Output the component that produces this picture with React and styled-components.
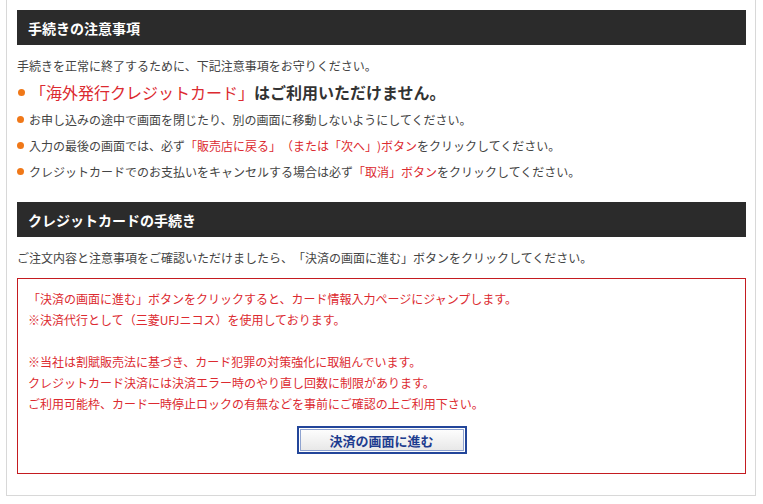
import styled, { createGlobalStyle } from "styled-components";

const GlobalStyle = createGlobalStyle`
  html, body {
    margin: 0;
    padding: 0;
    background: #fff;
  }
  body {
    font-family: "Noto Sans CJK JP", "Noto Sans", sans-serif;
    color: #444;
    text-spacing-trim: space-all;
  }
`;

const Page = styled.div`
  padding: 0 7px 0 6px;
`;

const Panel = styled.div`
  border: 1px solid #d8d8d8;
  border-top: none;
  padding: 10px 9px 21px 10px;
`;

const Heading = styled.h2`
  margin: ${(props) => props.$top || 0}px 0 0;
  height: 35px;
  padding: 0 11px;
  display: flex;
  align-items: center;
  background: #2b2b2b;
  color: #fff;
  font-size: 14px;
  font-weight: 700;
`;

const Lead = styled.p`
  margin: ${(props) => props.$mt || 10}px 0 0;
  font-size: 12px;
  line-height: ${(props) => props.$lh || 22}px;
`;

const NoticeList = styled.ul`
  margin: 1px 0 0;
  padding: 0;
  list-style: none;
`;

const Item = styled.li`
  display: flex;
  align-items: center;
  height: ${(props) => (props.$big ? 28 : 26)}px;
  font-size: ${(props) => (props.$big ? 16 : 12)}px;
  &::before {
    content: "";
    flex: none;
    width: 7px;
    height: 7px;
    border-radius: 50%;
    background: #f07818;
    margin: 0 5px 0 ${(props) => (props.$big ? 1 : 0)}px;
  }
`;

const Red = styled.span`
  color: #dc2a30;
`;

const Strong = styled.span`
  font-weight: 700;
  color: #333;
`;

const AlertBox = styled.div`
  margin-top: 10px;
  border: 1px solid #c41b20;
  padding: 9px 10px 19px;
  color: #dc2a30;
  font-size: 12px;
  line-height: 21px;
`;

const Line = styled.div`
  min-height: 21px;
`;

const ButtonRow = styled.div`
  display: flex;
  justify-content: center;
  margin-top: 12px;
`;

const PayButton = styled.button`
  width: 170px;
  height: 28px;
  border: 2px solid #23469a;
  box-shadow: inset 0 0 0 1px #fff, inset 0 0 0 2px #8fa3d0;
  background: linear-gradient(#ffffff, #e6e6e6);
  color: #1d3c8f;
  font-family: "Noto Sans CJK JP", sans-serif;
  font-size: 13px;
  font-weight: 700;
  cursor: pointer;
  padding: 0;
`;

export default function App() {
  return (
    <>
      <GlobalStyle />
      <Page>
        <Panel>
          <Heading>手続きの注意事項</Heading>
          <Lead>手続きを正常に終了するために、下記注意事項をお守りください。</Lead>
          <NoticeList>
            <Item $big>
              <Red>「海外発行クレジットカード」</Red>
              <Strong>はご利用いただけません。</Strong>
            </Item>
            <Item>お申し込みの途中で画面を閉じたり、別の画面に移動しないようにしてください。</Item>
            <Item>
              入力の最後の画面では、必ず<Red>「販売店に戻る」（または「次へ」)ボタン</Red>をクリックしてください。
            </Item>
            <Item>
              クレジットカードでのお支払いをキャンセルする場合は必ず<Red>「取消」ボタン</Red>をクリックしてください。
            </Item>
          </NoticeList>

          <Heading $top={18}>クレジットカードの手続き</Heading>
          <Lead $mt={11} $lh={20}>ご注文内容と注意事項をご確認いただけましたら、「決済の画面に進む」ボタンをクリックしてください。</Lead>
          <AlertBox>
            <Line>「決済の画面に進む」ボタンをクリックすると、カード情報入力ページにジャンプします。</Line>
            <Line>※決済代行として（三菱UFJニコス）を使用しております。</Line>
            <Line />
            <Line>※当社は割賦販売法に基づき、カード犯罪の対策強化に取組んでいます。</Line>
            <Line>クレジットカード決済には決済エラー時のやり直し回数に制限があります。</Line>
            <Line>ご利用可能枠、カード一時停止ロックの有無などを事前にご確認の上ご利用下さい。</Line>
            <ButtonRow>
              <PayButton type="button">決済の画面に進む</PayButton>
            </ButtonRow>
          </AlertBox>
        </Panel>
      </Page>
    </>
  );
}
